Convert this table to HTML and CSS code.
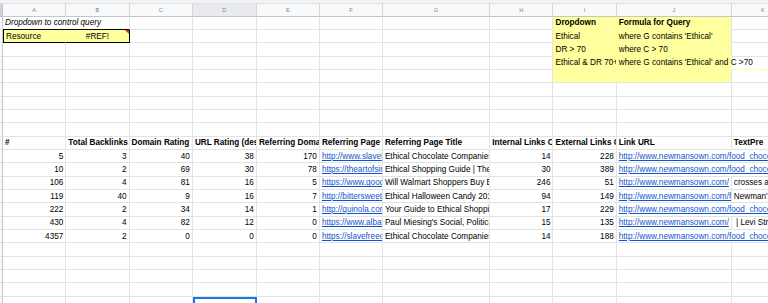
FILE: index.html
```html
<!DOCTYPE html>
<html>
<head>
<meta charset="utf-8">
<link rel="stylesheet" href="styles.css">
</head>
<body>
<div class="topbar"></div>
<table class="sheet">
<colgroup>
<col class="w-rh"><col class="w-std"><col class="w-std"><col class="w-std"><col class="w-d"><col class="w-e"><col class="w-e"><col class="w-g"><col class="w-std"><col class="w-std"><col class="w-j"><col class="w-std">
</colgroup>
<tr class="colhead"><th class="corner"></th><th>A</th><th>B</th><th>C</th><th class="hl">D</th><th>E</th><th>F</th><th>G</th><th>H</th><th>I</th><th>J</th><th>K</th></tr>
<tr><td class="rh"></td><td colspan="2" class="i boxtop">Dropdown to control query</td><td></td><td></td><td></td><td></td><td></td><td></td><td class="y b">Dropdown</td><td class="yj b">Formula for Query</td><td></td></tr>
<tr><td class="rh"></td><td class="y2 y2l">Resource</td><td class="y2 y2r c err">#REF!</td><td></td><td></td><td></td><td></td><td></td><td></td><td class="y">Ethical</td><td class="yj">where G contains 'Ethical'</td><td></td></tr>
<tr><td class="rh"></td><td></td><td></td><td></td><td></td><td></td><td></td><td></td><td></td><td class="y">DR &gt; 70</td><td class="yj">where C &gt; 70</td><td></td></tr>
<tr><td class="rh"></td><td></td><td></td><td></td><td></td><td></td><td></td><td></td><td></td><td class="y">Ethical &amp; DR 70+</td><td colspan="2" class="yspill">where G contains 'Ethical' and C &gt;70</td></tr>
<tr><td class="rh"></td><td></td><td></td><td></td><td></td><td></td><td></td><td></td><td></td><td class="y ylast"></td><td class="yj ylast"></td><td></td></tr>
<tr><td class="rh"></td><td></td><td></td><td></td><td></td><td></td><td></td><td></td><td></td><td></td><td></td><td></td></tr>
<tr><td class="rh"></td><td></td><td></td><td></td><td></td><td></td><td></td><td></td><td></td><td></td><td></td><td></td></tr>
<tr><td class="rh"></td><td></td><td></td><td></td><td></td><td></td><td></td><td></td><td></td><td></td><td></td><td></td></tr>
<tr><td class="rh"></td><td></td><td></td><td></td><td></td><td></td><td></td><td></td><td></td><td></td><td></td><td></td></tr>
<tr class="hdr"><td class="rh"></td><td>#</td><td>Total Backlinks</td><td>Domain Rating</td><td>URL Rating (desc)</td><td>Referring Domains</td><td>Referring Page URL</td><td>Referring Page Title</td><td>Internal Links Count</td><td>External Links Count</td><td>Link URL</td><td>TextPre</td></tr>
<tr><td class="rh"></td><td class="n">5</td><td class="n">3</td><td class="n">40</td><td class="n">38</td><td class="n">170</td><td class="a">http://www.slavefreechocolate.org/ethical-chocolate-companies</td><td>Ethical Chocolate Companies - Slave Free Chocolate</td><td class="n">14</td><td class="n">228</td><td colspan="2" class="a">http://www.newmansown.com/food_chocolate_candy_bars.aspx</td></tr>
<tr><td class="rh"></td><td class="n">10</td><td class="n">2</td><td class="n">69</td><td class="n">30</td><td class="n">78</td><td class="a">https://theartofsimple.net/ethical-shopping-guide/</td><td>Ethical Shopping Guide | The Art of Simple</td><td class="n">30</td><td class="n">389</td><td colspan="2" class="a">http://www.newmansown.com/food_chocolate_candy_bars.aspx</td></tr>
<tr><td class="rh"></td><td class="n">106</td><td class="n">4</td><td class="n">81</td><td class="n">16</td><td class="n">5</td><td class="a">https://www.goodhousekeeping.com/food/ethical-chocolate</td><td>Will Walmart Shoppers Buy Ethical Chocolate?</td><td class="n">246</td><td class="n">51</td><td class="a">http://www.newmansown.com/</td><td>crosses a line of ethical brands</td></tr>
<tr><td class="rh"></td><td class="n">119</td><td class="n">40</td><td class="n">9</td><td class="n">16</td><td class="n">7</td><td class="a">http://bittersweetrevolution.com/ethical-halloween-candy</td><td>Ethical Halloween Candy 2019 Guide</td><td class="n">94</td><td class="n">149</td><td class="a">http://www.newmansown.com/food_chocolate_candy_bars.aspx</td><td>Newman's Own Organics</td></tr>
<tr><td class="rh"></td><td class="n">222</td><td class="n">2</td><td class="n">34</td><td class="n">14</td><td class="n">1</td><td class="a">http://quinola.com/ethical-shopping</td><td>Your Guide to Ethical Shopping</td><td class="n">17</td><td class="n">229</td><td colspan="2" class="a">http://www.newmansown.com/food_chocolate_candy_bars.aspx</td></tr>
<tr><td class="rh"></td><td class="n">430</td><td class="n">4</td><td class="n">82</td><td class="n">12</td><td class="n">0</td><td class="a">https://www.albany.edu/~pm157/teaching</td><td>Paul Miesing's Social, Political and Ethical Issues</td><td class="n">15</td><td class="n">135</td><td class="a">http://www.newmansown.com/</td><td>&nbsp;| Levi Strauss &amp; Co.</td></tr>
<tr><td class="rh"></td><td class="n">4357</td><td class="n">2</td><td class="n">0</td><td class="n">0</td><td class="n">0</td><td class="a">https://slavefreechocolate.org/ethical-chocolate-companies</td><td>Ethical Chocolate Companies - Slave Free</td><td class="n">14</td><td class="n">188</td><td colspan="2" class="a">http://www.newmansown.com/food_chocolate_candy_bars.aspx</td></tr>
<tr><td class="rh"></td><td></td><td></td><td></td><td></td><td></td><td></td><td></td><td></td><td></td><td></td><td></td></tr>
<tr><td class="rh"></td><td></td><td></td><td></td><td></td><td></td><td></td><td></td><td></td><td></td><td></td><td></td></tr>
<tr><td class="rh"></td><td></td><td></td><td></td><td></td><td></td><td></td><td></td><td></td><td></td><td></td><td></td></tr>
<tr><td class="rh"></td><td></td><td></td><td></td><td></td><td></td><td></td><td></td><td></td><td></td><td></td><td></td></tr>
<tr><td class="rh"></td><td></td><td></td><td></td><td class="sel"></td><td></td><td></td><td></td><td></td><td></td><td></td><td></td></tr>
</table>
</body>
</html>
```

FILE: styles.css
```css
html, body {
  margin: 0;
  padding: 0;
  width: 768px;
  height: 303px;
  overflow: hidden;
  background: #fff;
}
body {
  font-family: "Liberation Sans", Arial, sans-serif;
  font-size: 8.2px;
  color: #000;
}
.topbar {
  height: 3px;
  background: #f1f3f4;
}
.sheet {
  border-collapse: separate;
  border-spacing: 0;
  table-layout: fixed;
  width: 795.1px;
}
.w-rh { width: 3px; }
.w-std { width: 63.3px; }
.w-d { width: 64px; }
.w-e { width: 63px; }
.w-g { width: 107.3px; }
.w-j { width: 115px; }

.sheet tr { height: 13.33px; }
.sheet tr.colhead { height: 13.7px; }

.sheet th {
  background: #f8f9fa;
  border-right: 1px solid #d3d5d8;
  border-bottom: 1px solid #c4c7c9;
  border-top: 1px solid #e0e2e4;
  color: #80868b;
  font-weight: normal;
  font-size: 5.6px;
  text-align: center;
  padding: 0;
  line-height: 10px;
  vertical-align: middle;
}
.sheet th.corner {
  background: #d0d2d5;
  border-right: 1px solid #c4c7c9;
}
.sheet th.hl { background: #e8eaed; }

.sheet td {
  border-right: 1px solid #e2e3e3;
  border-bottom: 1px solid #e2e3e3;
  padding: 1px 2px 0 2px;
  white-space: nowrap;
  overflow: hidden;
  line-height: 10px;
  vertical-align: middle;
  color: #000;
}
.sheet td.rh {
  padding: 0;
  background: #f8f9fa;
  border-right: 1px solid #c4c7c9;
}
.n { text-align: right; }
.c { text-align: center; }
.b { font-weight: bold; }
.i { font-style: italic; }
.a {
  color: #1155cc !important;
  text-decoration: underline;
}
.hdr td { font-weight: bold; }

.boxtop { border-bottom-color: #000 !important; }
.y2 {
  background: #ffff9e;
  border-bottom-color: #000 !important;
}
.y2l {
  border-left: 1px solid #000;
  border-right-color: #ffff9e !important;
}
.y2r { border-right-color: #000 !important; }
.err { position: relative; }
.err::after {
  content: "";
  position: absolute;
  top: 0;
  right: 0;
  border-left: 4px solid transparent;
  border-top: 4px solid #e0261b;
}

.y {
  background: #ffff9e;
  border-right-color: #ffff9e !important;
  border-bottom-color: #ffff9e !important;
}
.yj {
  background: #ffff9e;
  border-bottom-color: #ffff9e !important;
  border-right-color: #e2e3e3;
}
.ylast { border-bottom-color: #e2e3e3 !important; }
.yspill {
  background: linear-gradient(90deg, #ffff9e 115px, #fff 115px);
  border-bottom-color: #ffff9e !important;
}

.sel {
  outline: 2px solid #1a73e8;
  outline-offset: -2px;
}
```
